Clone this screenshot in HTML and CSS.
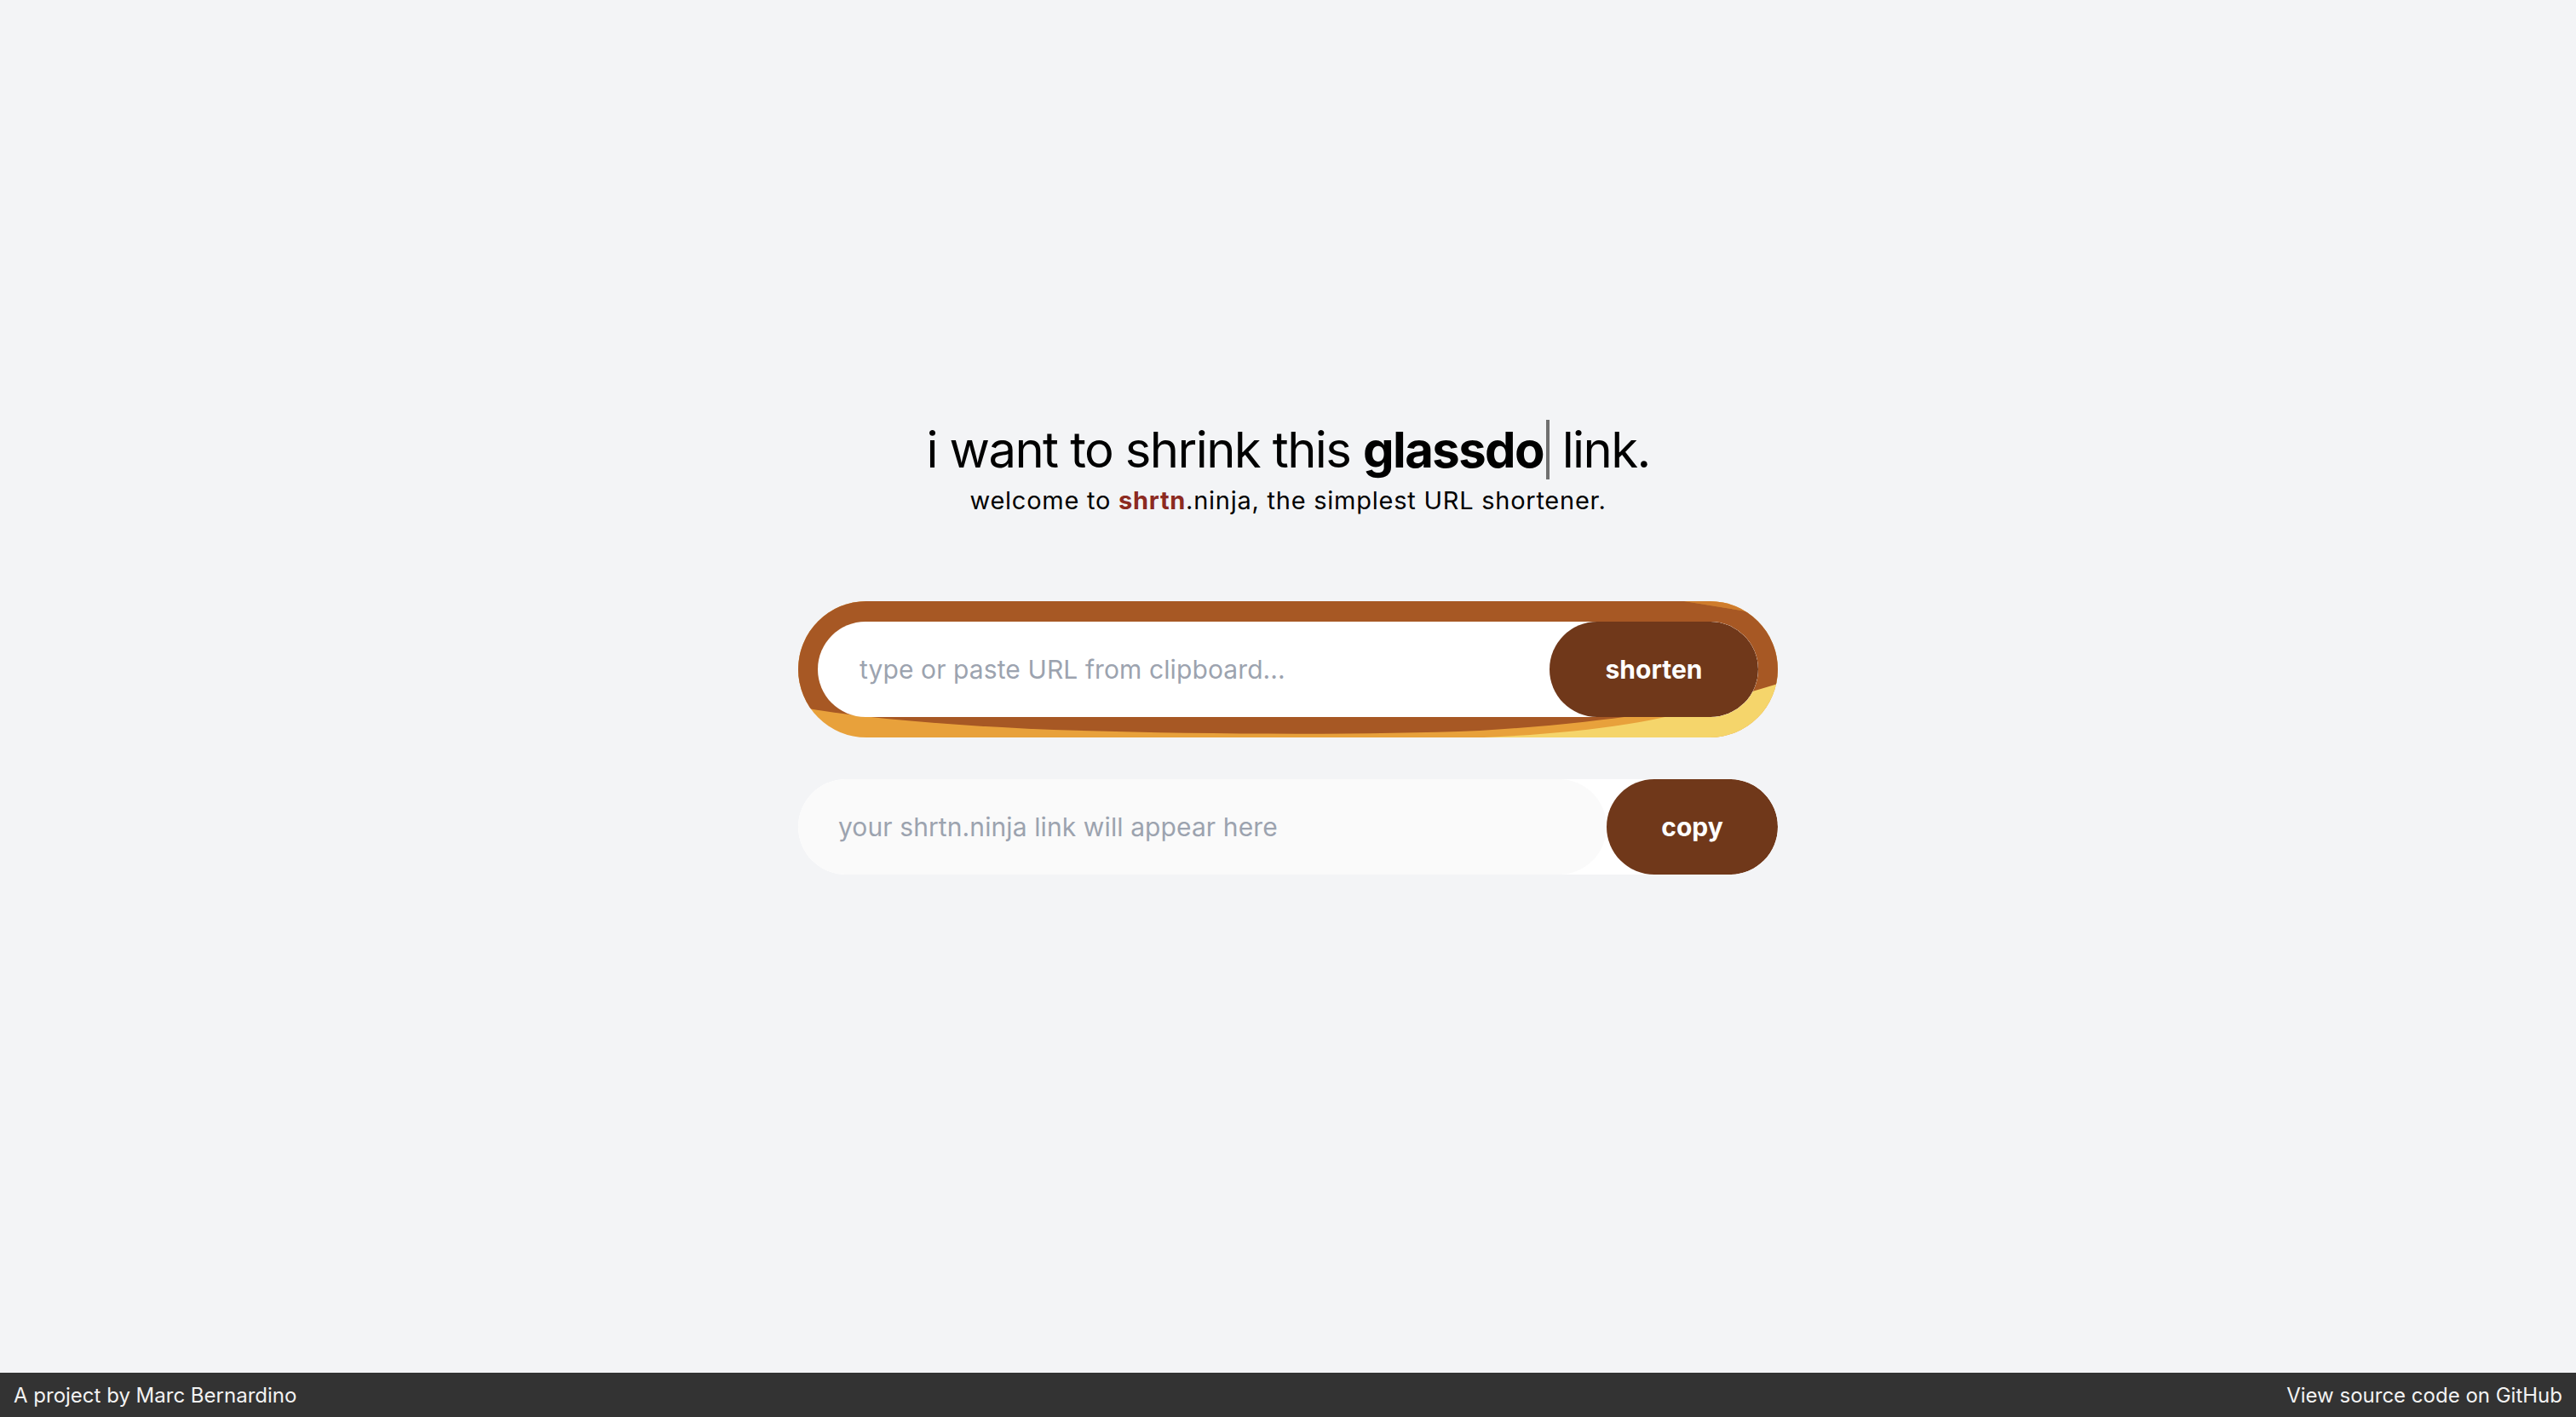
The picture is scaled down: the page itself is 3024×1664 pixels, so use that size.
FILE: index.html
```html
<!DOCTYPE html>
<html lang="en">
<head>
<meta charset="utf-8">
<title>shrtn.ninja</title>
<link rel="stylesheet" href="styles.css">
</head>
<body>
<main class="page">
  <section class="hero">
    <h1 class="title">i want to shrink this <span class="typed">glassdo</span> link.</h1>
    <p class="tagline">welcome to <strong class="brand">shrtn</strong>.ninja, the simplest URL shortener.</p>
  </section>
  <form class="shrink-box">
    <svg class="blob" viewBox="0 0 1150 160" preserveAspectRatio="none" aria-hidden="true">
      <rect width="1150" height="160" fill="#e8a13b"/>
      <path fill="#cf7c2c" d="M1040,0 H1150 V18 Z"/>
      <path fill="#f5d56b" d="M805,160 C920,155 1010,142 1070,122 L1150,92 V160 Z"/>
      <path fill="#a75824" d="M0,0 H1040 L1150,18 V97 L1120,106 C1050,125 960,142 800,152 C650,158 450,156 300,151 C180,146 80,138 0,124 Z"/>
    </svg>
    <div class="field-row">
      <input class="url-input" type="text" placeholder="type or paste URL from clipboard...">
      <button class="btn btn-shorten" type="button">shorten</button>
    </div>
  </form>
  <div class="result-row">
    <input class="result-input" type="text" placeholder="your shrtn.ninja link will appear here" readonly>
    <button class="btn btn-copy" type="button">copy</button>
  </div>
</main>
<footer class="footer">
  <span class="credit">A project by Marc Bernardino</span>
  <a class="source" href="#">View source code on GitHub</a>
</footer>
</body>
</html>
```
FILE: styles.css
```css
* { box-sizing: border-box; }

html, body { height: 100%; }

body {
  margin: 0;
  min-height: 100vh;
  display: flex;
  flex-direction: column;
  background: #f3f4f6;
  font-family: Inter, "Noto Sans", "Liberation Sans", sans-serif;
  color: #000;
}

.page {
  flex: 1;
  display: flex;
  flex-direction: column;
  align-items: center;
  padding-top: 492px;
}

.hero {
  display: flex;
  flex-direction: column;
  align-items: center;
}

.title {
  margin: 0;
  font-size: 58px;
  line-height: 72px;
  font-weight: 400;
  letter-spacing: -1.6px;
  white-space: nowrap;
}

.typed {
  font-weight: 700;
  border-right: 4px solid #707070;
  padding-right: 3px;
}

.tagline {
  margin: 6px 0 0;
  font-size: 29px;
  line-height: 36px;
  letter-spacing: 0.75px;
}

.brand {
  font-weight: 700;
  color: #8c2a21;
}

.shrink-box {
  width: 1150px;
  margin: 100px 0 0;
  display: grid;
  border-radius: 9999px;
  overflow: hidden;
}

.blob {
  grid-area: 1 / 1;
  display: block;
  width: 100%;
  height: 100%;
}

.field-row {
  grid-area: 1 / 1;
  margin: 24px 23px 24px 23px;
  height: 112px;
  display: flex;
  background: #fff;
  border-radius: 9999px;
  overflow: hidden;
}

.url-input,
.result-input {
  flex: 1;
  min-width: 0;
  border: none;
  outline: none;
  font-family: inherit;
  font-size: 30px;
  letter-spacing: 0.1px;
  color: #000;
}

.url-input {
  background: transparent;
  padding: 0 0 0 49px;
}

.url-input::placeholder,
.result-input::placeholder {
  color: #9ca3af;
  opacity: 1;
}

.btn {
  border: none;
  border-radius: 9999px;
  background: #70381a;
  color: #fff;
  font-family: inherit;
  font-size: 30px;
  font-weight: 700;
  cursor: pointer;
}

.btn-shorten {
  width: 245px;
  height: 112px;
}

.result-row {
  width: 1150px;
  height: 112px;
  margin-top: 49px;
  display: flex;
  background: #fff;
  border-radius: 9999px;
  overflow: hidden;
}

.result-input {
  background: #fafafa;
  border-radius: 9999px;
  padding: 0 0 0 47px;
}

.btn-copy {
  width: 201px;
  height: 112px;
}

.footer {
  height: 52px;
  display: flex;
  justify-content: space-between;
  align-items: center;
  padding: 0 16px;
  background: #333;
  color: #f2f2f2;
  font-size: 24px;
}

.source {
  color: #f2f2f2;
  text-decoration: none;
}
```
